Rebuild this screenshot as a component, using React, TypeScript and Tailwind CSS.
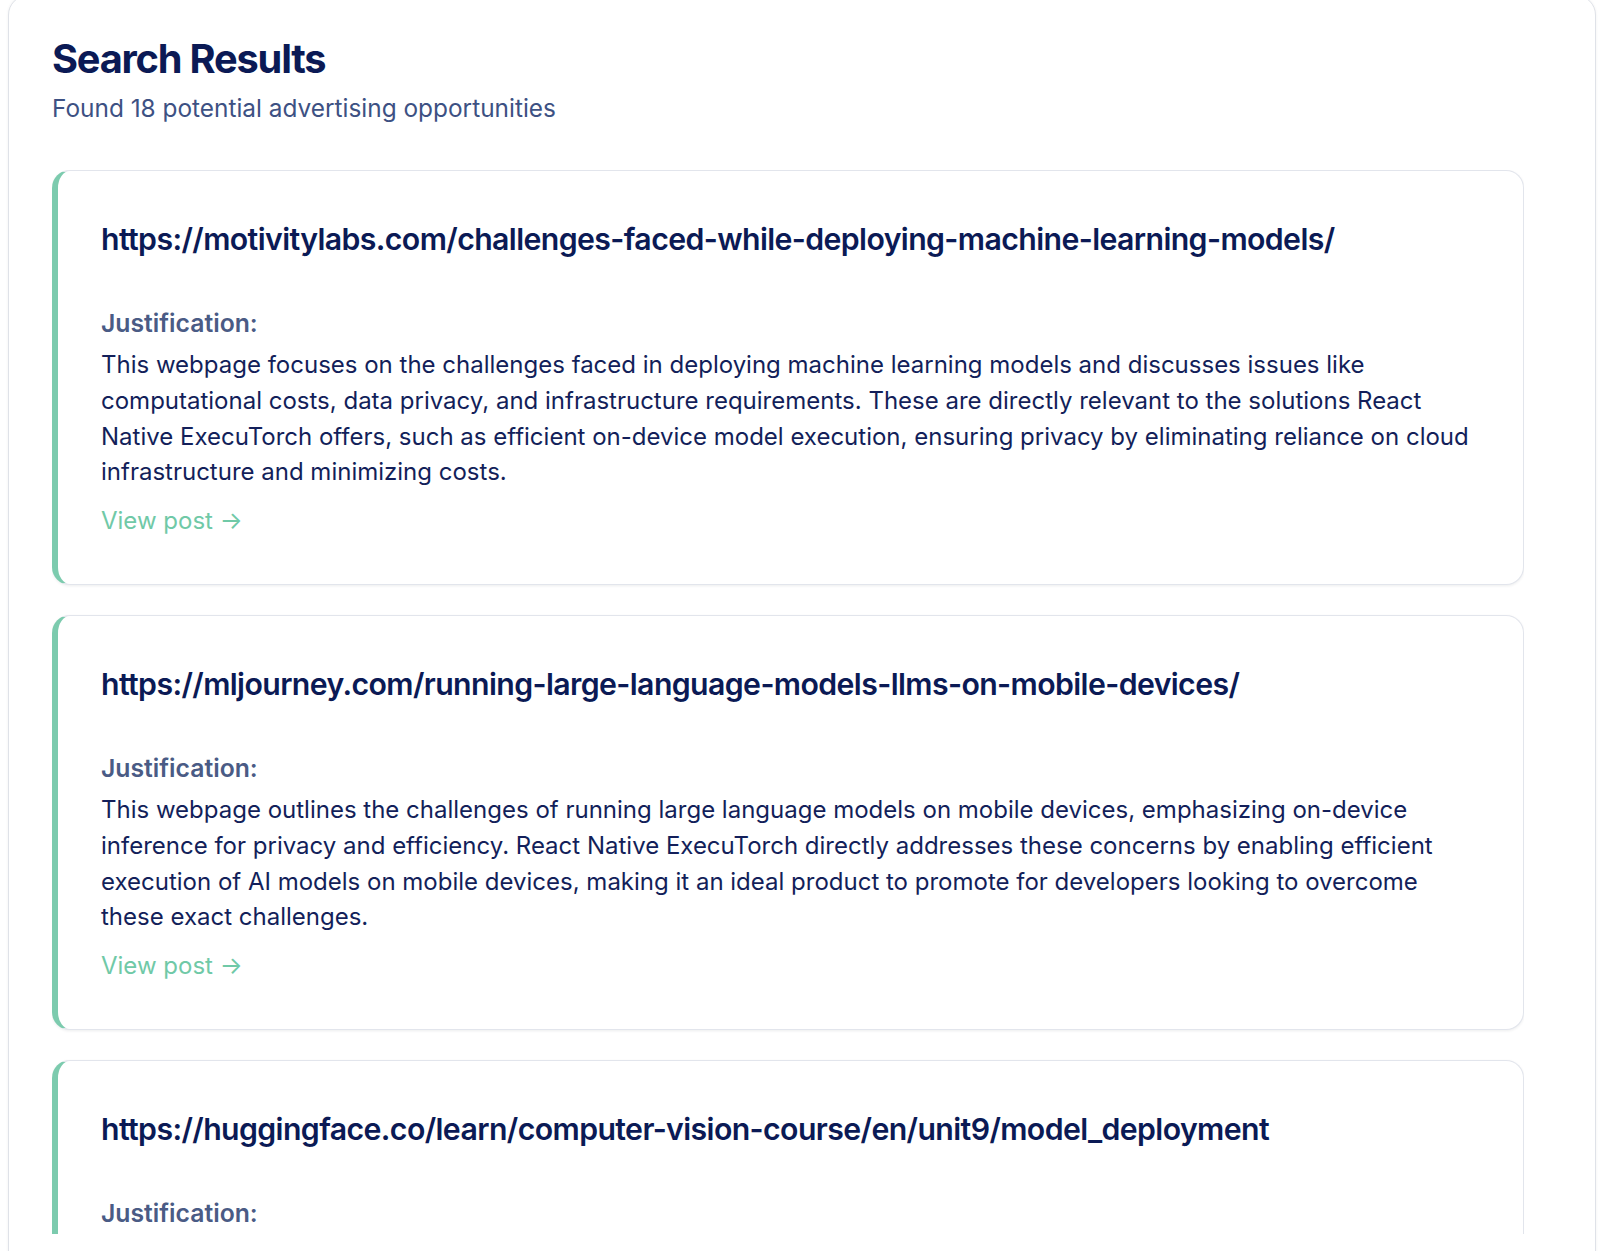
const results = [
  {
    url: "https://motivitylabs.com/challenges-faced-while-deploying-machine-learning-models/",
    justification:
      "This webpage focuses on the challenges faced in deploying machine learning models and discusses issues like computational costs, data privacy, and infrastructure requirements. These are directly relevant to the solutions React Native ExecuTorch offers, such as efficient on-device model execution, ensuring privacy by eliminating reliance on cloud infrastructure and minimizing costs.",
  },
  {
    url: "https://mljourney.com/running-large-language-models-llms-on-mobile-devices/",
    justification:
      "This webpage outlines the challenges of running large language models on mobile devices, emphasizing on-device inference for privacy and efficiency. React Native ExecuTorch directly addresses these concerns by enabling efficient execution of AI models on mobile devices, making it an ideal product to promote for developers looking to overcome these exact challenges.",
  },
  {
    url: "https://huggingface.co/learn/computer-vision-course/en/unit9/model_deployment",
    justification: "",
  },
];

const ResultCard = ({ url, justification }: { url: string; justification: string }) => {
  return (
    <div className="rounded-[18px] border border-[#e2e5ec] border-l-[6px] border-l-[#7ccbae] bg-white px-[43px] pt-[44px] pb-[45px] shadow-[0_1px_3px_rgba(15,23,42,0.08)]">
      <h3 className="text-[30.25px] leading-[49px] font-semibold tracking-[-0.02em] text-[#0b1a55]">{url}</h3>
      <div className="mt-[41px] text-[24.75px] leading-[36px] font-semibold text-[#4a5b85]">Justification:</div>
      {justification && (
        <>
          <p className="mt-[6px] text-[24px] leading-[35.75px] text-[#131f5a]">{justification}</p>
          <a href="#" className="mt-[13px] block text-[24px] leading-[36px] text-[#70c9a7]">
            View post →
          </a>
        </>
      )}
    </div>
  );
};

export default function App() {
  return (
    <div className="h-[1251px] overflow-hidden bg-white font-['Inter','Noto_Sans',sans-serif]">
      <div className="ml-[8px] -mt-[5px] h-[1300px] w-[1588px] rounded-[20px] border border-[#dfe2e8] bg-white pl-[43px] shadow-[0_0_3px_rgba(15,23,42,0.06)]">
        <div className="pt-[39px]">
          <h1 className="text-[39.75px] leading-[48px] font-bold tracking-[-0.03em] text-[#0b1a55]">Search Results</h1>
          <p className="mt-[9px] text-[24.4px] leading-[32px] text-[#3d5183]">
            Found 18 potential advertising opportunities
          </p>
        </div>
        <div className="mt-[46px] h-[1064px] w-[1472px] overflow-hidden">
          <div className="flex flex-col gap-[30px] pb-4">
            {results.map((item, index) => (
              <ResultCard key={index} url={item.url} justification={item.justification} />
            ))}
          </div>
        </div>
      </div>
    </div>
  );
}
